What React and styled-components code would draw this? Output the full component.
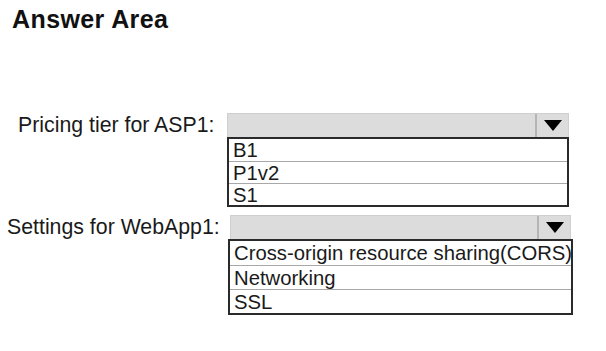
import React from 'react';
import styled, { createGlobalStyle } from 'styled-components';

const GlobalStyle = createGlobalStyle`
   html, body {
      margin: 0;
      padding: 0;
      background: #ffffff;
   }
   body {
      font-family: 'Liberation Sans', Arial, sans-serif;
      color: #111;
   }
`;

const Page = styled.div`
   width: 606px;
   height: 351px;
   padding: 7px 0 0 0;
   box-sizing: border-box;
   overflow: hidden;
`;

const Title = styled.h1`
   margin: 0 0 0 12px;
   font-size: 25px;
   line-height: 1;
   font-weight: 700;
   letter-spacing: 0.4px;
   color: #111;
`;

const Form = styled.div`
   display: flex;
   flex-direction: column;
   gap: 8px;
   margin-top: 81px;
`;

const Row = styled.div`
   display: grid;
   grid-template-columns: ${props => props.labelWidth}px auto;
   align-items: start;
`;

const Label = styled.div`
   padding-left: ${props => props.indent}px;
   font-size: 21.3px;
   line-height: 24px;
   white-space: nowrap;
   color: #1a1a1a;
`;

const Dropdown = styled.div`
   display: flex;
   flex-direction: column;
   width: ${props => props.width}px;
`;

const Bar = styled.div`
   display: flex;
   height: 24px;
   margin: 0 ${props => props.inset}px 0 ${props => props.inset}px;
   background: #dcdcdc;
   border: 1px solid #cfcfcf;
   border-bottom: none;
   box-sizing: border-box;
`;

const BarField = styled.div`
   flex: 1;
`;

const ArrowCell = styled.div`
   width: 31px;
   display: flex;
   align-items: center;
   justify-content: center;
   border-left: 2px solid #b5b5b5;
`;

const List = styled.div`
   display: flex;
   flex-direction: column;
   border: 2px solid #2a2a2a;
   background: #fff;
`;

const Item = styled.div`
   box-sizing: border-box;
   height: ${props => props.rowHeight}px;
   padding: 2px 0 0 4px;
   line-height: ${props => props.rowHeight - 3}px;
   font-size: 20.3px;
   white-space: nowrap;
   color: #1a1a1a;
   & + & {
      border-top: 1px solid #a8a8a8;
   }
`;

const Arrow = () => (
   <svg width="18" height="11" viewBox="0 0 18 11">
      <polygon points="0,0 18,0 9,11" fill="#000" />
   </svg>
);

const questions = [
   {
      label: 'Pricing tier for ASP1:',
      indent: 18,
      labelWidth: 227,
      width: 342,
      inset: 0,
      rowHeight: 22,
      options: ['B1', 'P1v2', 'S1'],
   },
   {
      label: 'Settings for WebApp1:',
      indent: 7,
      labelWidth: 228,
      width: 345,
      inset: 2,
      rowHeight: 24,
      options: ['Cross-origin resource sharing(CORS)', 'Networking', 'SSL'],
   },
];

export default function App() {
   return (
      <Page>
         <GlobalStyle />
         <Title>Answer Area</Title>
         <Form>
            {questions.map(q => (
               <Row key={q.label} labelWidth={q.labelWidth}>
                  <Label indent={q.indent}>{q.label}</Label>
                  <Dropdown width={q.width}>
                     <Bar inset={q.inset}>
                        <BarField />
                        <ArrowCell>
                           <Arrow />
                        </ArrowCell>
                     </Bar>
                     <List>
                        {q.options.map(option => (
                           <Item key={option} rowHeight={q.rowHeight}>
                              {option}
                           </Item>
                        ))}
                     </List>
                  </Dropdown>
               </Row>
            ))}
         </Form>
      </Page>
   );
}
